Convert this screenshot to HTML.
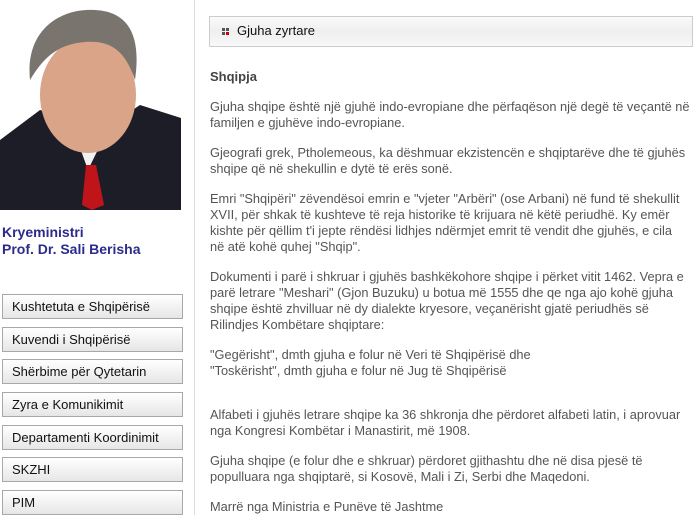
<!DOCTYPE html>
<html><head><meta charset="utf-8"><style>
body{margin:0;width:699px;height:515px;overflow:hidden;background:#fff;font-family:"Liberation Sans",Arial,sans-serif;position:relative}
.sep{position:absolute;left:194px;top:0;width:1px;height:515px;background:#ddd}
.photo{position:absolute;left:0;top:0;width:181px;height:210px}
.name{position:absolute;left:2px;top:224px;font-size:14px;font-weight:bold;color:#2b2b8c;line-height:17px}
.btn{position:absolute;left:2px;height:23px;border:1px solid #a8a8a8;background:linear-gradient(#fff,#e6e6e6);font-size:13px;color:#111;line-height:23px;padding-left:9px;width:170px}
.hdr{position:absolute;left:209px;top:16px;width:482px;height:29px;border:1px solid #ccc;background:linear-gradient(#fafafa,#efefef 50%,#f8f8f8);font-size:13px;color:#111;line-height:28px}
.hdr svg{position:absolute;left:12px;top:11px;display:block}
.hdr span{position:absolute;left:27px;top:0}
.c{position:absolute;left:210px;top:68px;font-size:12.8px;color:#555;line-height:16px;white-space:nowrap}
.c h3{margin:0 0 13px;font-size:13px;color:#444;line-height:18px}
.c p{margin:0 0 14px}
</style></head><body>
<svg class="photo" viewBox="0 0 181 210">
<rect width="181" height="210" fill="#fff"/>
<path d="M0 140 L40 110 L70 120 L110 125 L140 105 L181 118 L181 210 L0 210Z" fill="#1d1d27"/>
<path d="M70 120 L88 170 L110 125Z" fill="#f2f2f2"/>
<path d="M86 165 L96 165 L104 205 L92 210 L82 205Z" fill="#c0141b"/>
<ellipse cx="88" cy="95" rx="48" ry="58" fill="#d9a488"/>
<path d="M30 80 C25 30 60 8 95 10 C135 12 140 45 135 80 C125 50 110 40 85 42 C60 44 45 55 30 80Z" fill="#7a746e"/>
</svg>
<div class="name">Kryeministri<br>Prof. Dr. Sali Berisha</div>
<div class="btn" style="top:294px">Kushtetuta e Shqipërisë</div>
<div class="btn" style="top:327px">Kuvendi i Shqipërisë</div>
<div class="btn" style="top:359px">Shërbime për Qytetarin</div>
<div class="btn" style="top:392px">Zyra e Komunikimit</div>
<div class="btn" style="top:425px">Departamenti Koordinimit</div>
<div class="btn" style="top:457px">SKZHI</div>
<div class="btn" style="top:490px">PIM</div>
<div class="sep"></div>
<div class="hdr"><svg width="8" height="8"><rect x="0" y="0" width="3" height="3" fill="#555"/><rect x="4" y="0" width="3" height="3" fill="#555"/><rect x="0" y="4" width="3" height="3" fill="#555"/><rect x="4" y="4" width="3" height="3" fill="#c00"/></svg><span>Gjuha zyrtare</span></div>
<div class="c">
<h3>Shqipja</h3>
<p>Gjuha shqipe është një gjuhë indo-evropiane dhe përfaqëson një degë të veçantë në<br>familjen e gjuhëve indo-evropiane.</p>
<p>Gjeografi grek, Ptholemeous, ka dëshmuar ekzistencën e shqiptarëve dhe të gjuhës<br>shqipe që në shekullin e dytë të erës sonë.</p>
<p>Emri "Shqipëri" zëvendësoi emrin e "vjeter "Arbëri" (ose Arbani) në fund të shekullit<br>XVII, për shkak të kushteve të reja historike të krijuara në këtë periudhë. Ky emër<br>kishte për qëllim t'i jepte rëndësi lidhjes ndërmjet emrit të vendit dhe gjuhës, e cila<br>në atë kohë quhej "Shqip".</p>
<p>Dokumenti i parë i shkruar i gjuhës bashkëkohore shqipe i përket vitit 1462. Vepra e<br>parë letrare "Meshari" (Gjon Buzuku) u botua më 1555 dhe qe nga ajo kohë gjuha<br>shqipe është zhvilluar në dy dialekte kryesore, veçanërisht gjatë periudhës së<br>Rilindjes Kombëtare shqiptare:</p>
<p>"Gegërisht", dmth gjuha e folur në Veri të Shqipërisë dhe<br>"Toskërisht", dmth gjuha e folur në Jug të Shqipërisë</p>
<p style="margin-top:28px">Alfabeti i gjuhës letrare shqipe ka 36 shkronja dhe përdoret alfabeti latin, i aprovuar<br>nga Kongresi Kombëtar i Manastirit, më 1908.</p>
<p>Gjuha shqipe (e folur dhe e shkruar) përdoret gjithashtu dhe në disa pjesë të<br>populluara nga shqiptarë, si Kosovë, Mali i Zi, Serbi dhe Maqedoni.</p>
<p>Marrë nga Ministria e Punëve të Jashtme</p>
</div>
</body></html>
